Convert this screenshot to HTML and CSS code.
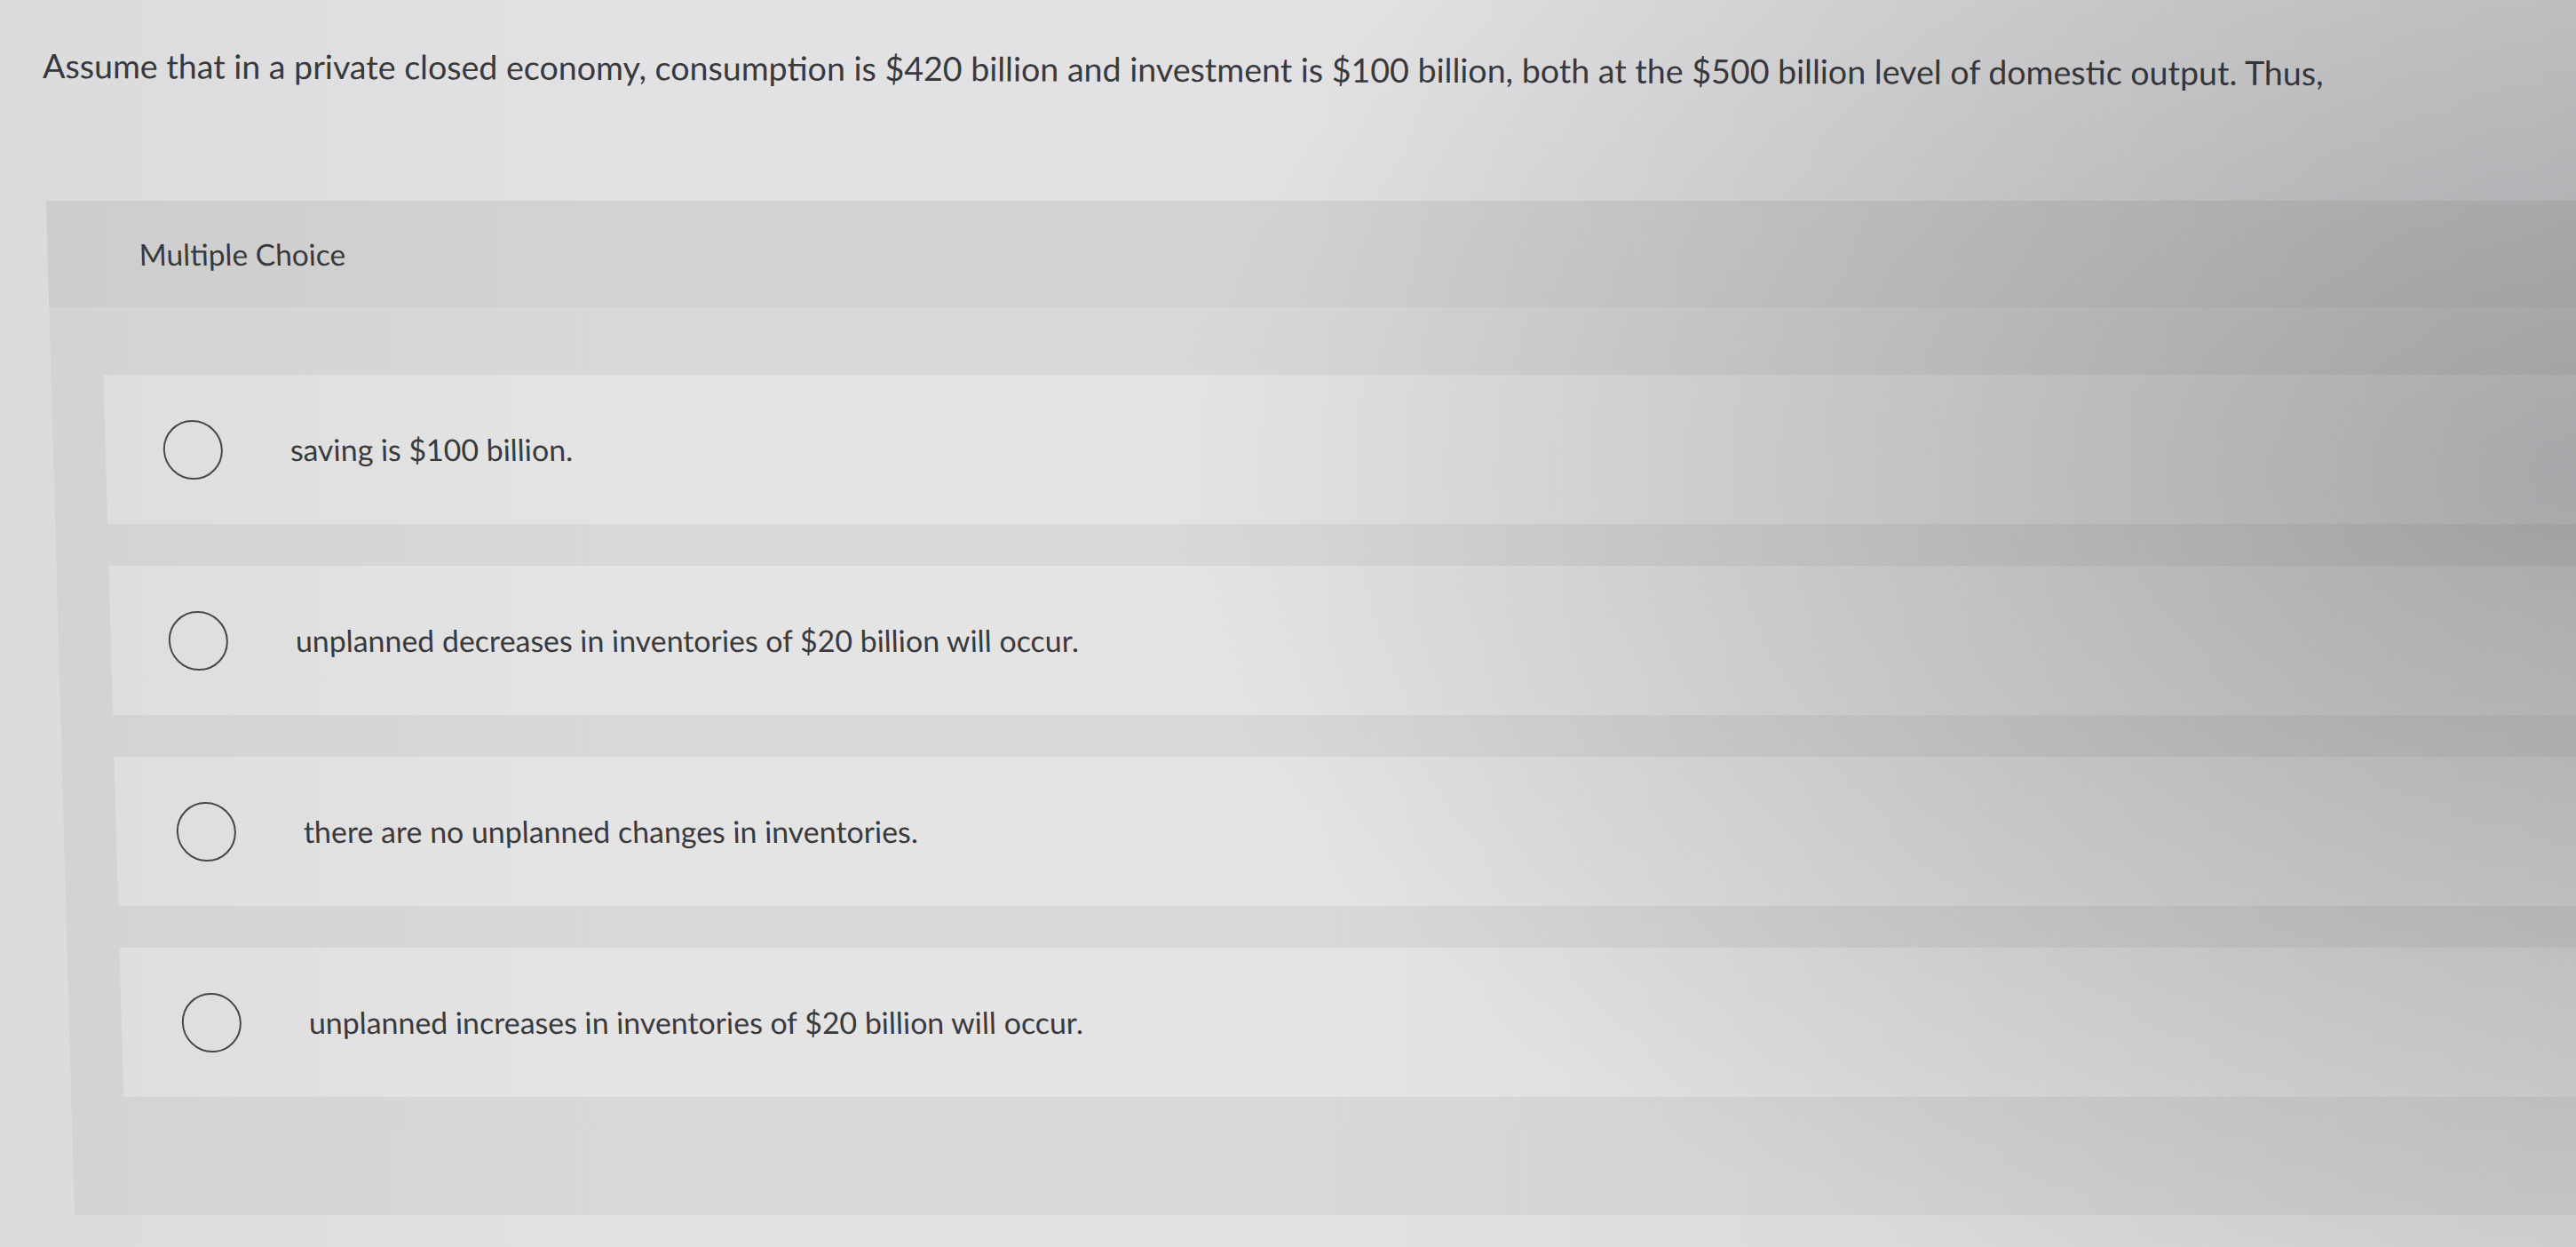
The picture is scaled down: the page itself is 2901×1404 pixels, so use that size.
FILE: index.html
```html
<!DOCTYPE html>
<html lang="en">
<head>
<meta charset="utf-8">
<title>Multiple Choice</title>
<link rel="stylesheet" href="styles.css">
</head>
<body>
<main class="page">
  <p class="question">Assume that in a private closed economy, consumption is $420 billion and investment is $100 billion, both at the $500 billion level of domestic output. Thus,</p>
  <section class="panel">
    <header class="panel-head">Multiple Choice</header>
    <div class="options">
      <label class="option"><span class="radio"></span><span class="option-text">saving is $100 billion.</span></label>
      <label class="option"><span class="radio"></span><span class="option-text">unplanned decreases in inventories of $20 billion will occur.</span></label>
      <label class="option"><span class="radio"></span><span class="option-text">there are no unplanned changes in inventories.</span></label>
      <label class="option"><span class="radio"></span><span class="option-text">unplanned increases in inventories of $20 billion will occur.</span></label>
    </div>
  </section>
</main>
</body>
</html>
```
FILE: styles.css
```css
html, body {
  margin: 0;
  padding: 0;
}
body {
  width: 2901px;
  height: 1404px;
  overflow: hidden;
  background: #e2e2e4;
  font-family: Lato, "Open Sans", "Liberation Sans", sans-serif;
  color: #3a3a3d;
  position: relative;
}
body::after {
  content: "";
  position: absolute;
  inset: 0;
  pointer-events: none;
  background:
    radial-gradient(ellipse 55% 70% at 100% 38%, rgba(40,40,50,0.26), rgba(40,40,50,0) 100%),
    linear-gradient(to right, rgba(0,0,0,0.03), rgba(0,0,0,0) 25%, rgba(0,0,0,0) 50%, rgba(0,0,0,0.07));
}
.page {
  padding: 52px 0 0 48px;
}
.question {
  margin: 0;
  font-size: 37.6px;
  line-height: 44px;
  white-space: nowrap;
  transform: rotate(0.18deg);
  transform-origin: left center;
}
.panel {
  margin: 130px 0 0 4px;
  background: #d9d9da;
  transform: skewX(1.6deg);
  transform-origin: top left;
}
.panel-head {
  height: 120px;
  display: flex;
  align-items: center;
  padding-left: 103px;
  background: #d3d3d4;
  font-size: 33.5px;
}
.options {
  display: flex;
  flex-direction: column;
  gap: 47px;
  padding: 76px 0 133px 59px;
}
.option {
  display: flex;
  align-items: center;
  height: 168px;
  padding-left: 65px;
  background: #e4e4e5;
  font-size: 33.9px;
}
.option:nth-child(n+3) {
  padding-left: 68px;
}
.radio {
  flex: none;
  width: 63px;
  height: 63px;
  border: 2.5px solid #4a4a4c;
  border-radius: 50%;
}
.option-text {
  margin-left: 76px;
  white-space: nowrap;
}
```
